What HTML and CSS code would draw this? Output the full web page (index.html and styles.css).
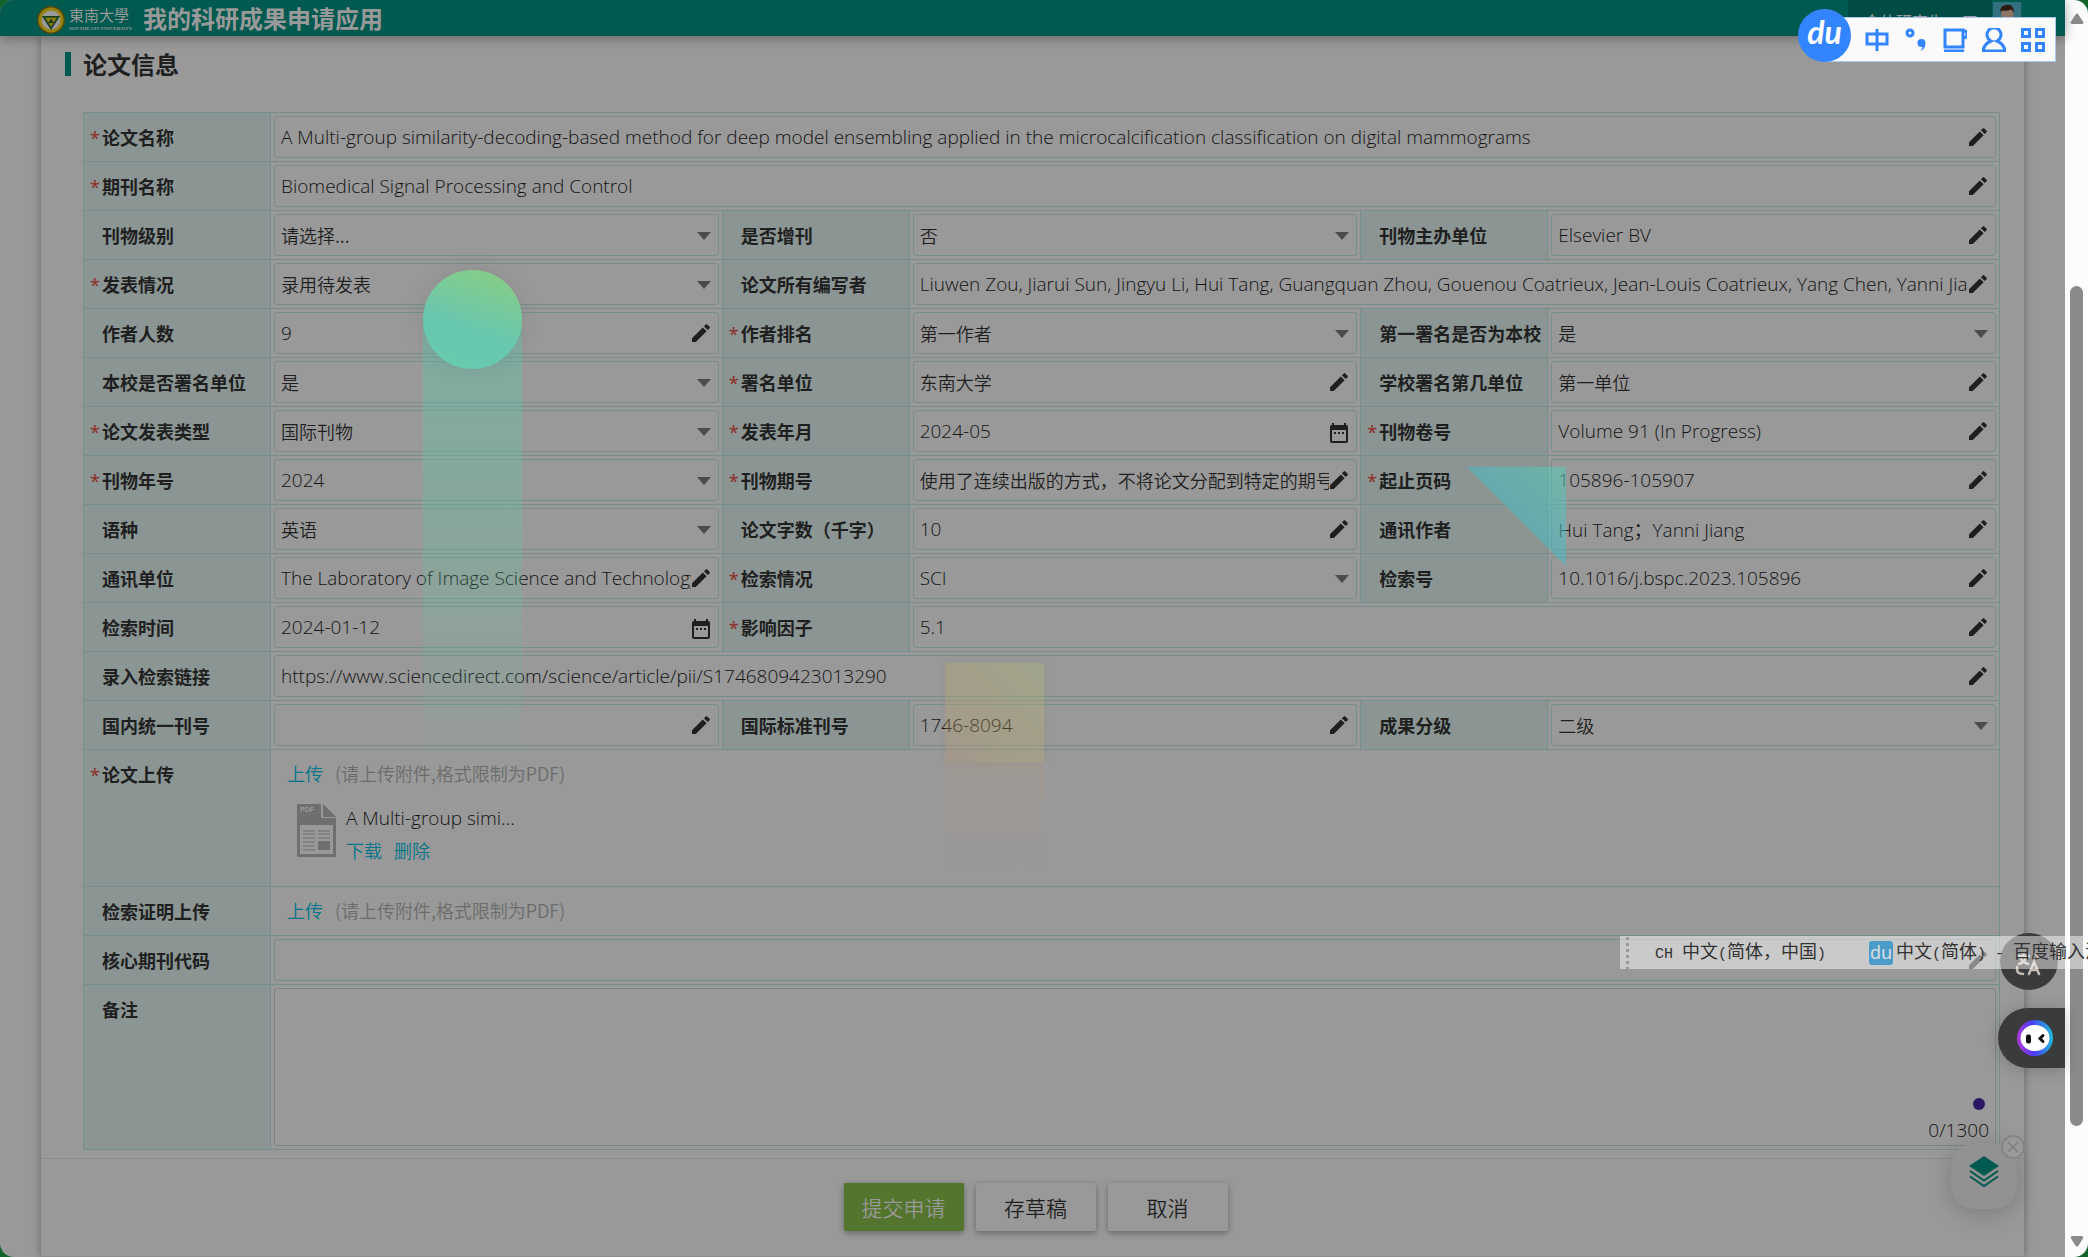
FILE: index.html
```html
<!DOCTYPE html>
<html lang="zh-CN">
<head>
<meta charset="utf-8">
<title>我的科研成果申请应用</title>
<link rel="stylesheet" href="styles.css">
</head>
<body>
<svg class="defs" aria-hidden="true">
  <symbol id="pen" viewBox="0 0 20 20"><path d="M1 15.2V19h3.8L15.6 8.2l-3.8-3.8zM18.600 5.200a1 1 0 0 0 0-1.400L16.200 1.400a1 1 0 0 0-1.400 0L12.900 3.300l3.800 3.800z"/></symbol>
  <symbol id="cal" viewBox="0 0 20 20"><path fill-rule="evenodd" d="M3 2V0h2v2h10V0h2v2h.5Q19 2 19 4v14q0 2-2 2H3q-2 0-2-2V4q0-2 2-2zM3 7v11h14V7zM5 9h2v2H5zm4 0h2v2H9zm4 0h2v2h-2z"/></symbol>
  <symbol id="down" viewBox="0 0 14 8"><path d="M0 0h14L7 8z"/></symbol>
</svg>
<div class="window">
  <div class="page">
    <header class="topbar">
      <svg class="seal" viewBox="0 0 28 28"><circle cx="14" cy="14" r="14" fill="#4e4a12"/><circle cx="14" cy="14" r="12.500" fill="#96820c"/><circle cx="14" cy="14" r="9.500" fill="#999"/><path d="M5 10h18l-9 14z" fill="#123c20"/><path d="M8 11.500h12L14 21z" fill="#8a7a10"/><path d="M11 17l3-4 3 4z" fill="#123c20"/></svg>
      <div class="school"><span class="school-cn">東南大學</span><span class="school-en">SOUTHEAST UNIVERSITY</span></div>
      <h1>我的科研成果申请应用</h1>
      <div class="account"><span>全体研究生</span><svg class="account-arrow" viewBox="0 0 14 8"><use href="#down"/></svg></div>
      <svg class="avatar" viewBox="0 0 30 36"><rect width="30" height="36" fill="#32707f"/><path d="M9 8h13v8q-6 8-13 0z" fill="#8d7565"/><path d="M8 11q-1-8 8-8 7 0 6 9l-2-4q-6 2-10 1z" fill="#2c1a12"/></svg>
    </header>
    <main class="card">
      <h2>论文信息</h2>
      <form id="paper">
      <table class="grid">
        <colgroup><col class="c-label"><col><col class="c-label"><col><col class="c-label"><col></colgroup>
        <tbody id="rows"></tbody>
      </table>
      <footer class="actions">
        <button type="button" class="primary">提交申请</button>
        <button type="button">存草稿</button>
        <button type="button">取消</button>
      </footer>
      </form>
    </main>
    <div class="ball-trail"></div>
    <div class="ball"></div>
    <svg class="triangle" viewBox="0 0 98 98"><defs><linearGradient id="tg" x1="0" y1="1" x2="1" y2="0"><stop offset=".4" stop-color="#44b7c8"/><stop offset="1" stop-color="#58ccb4"/></linearGradient></defs><path d="M0 0h98v98z" fill="url(#tg)" fill-opacity=".55"/></svg>
    <div class="square"></div>
    <div class="square-trail"></div>
    <i class="dot"></i>
    <button class="translate" type="button" aria-label="翻译"><svg viewBox="0 0 28 28" fill="none" stroke="#c5bcb4" stroke-width="2.500" stroke-linecap="round"><path d="M3 4h11M8.500 1v3M4 12q6-2 8-8M5 5q2 5 8 7M19 2h2q3 0 3 4M2 15v2q0 5 6 5M14 22l5-12 5 12M16 18h6"/></svg></button>
    <button class="assistant" type="button" aria-label="助手"><svg viewBox="0 0 36 36"><defs><linearGradient id="rg" x1="0" y1=".7" x2="1" y2=".6"><stop offset="0" stop-color="#b436d8"/><stop offset=".45" stop-color="#4b3cf5"/><stop offset="1" stop-color="#22b8dc"/></linearGradient></defs><circle cx="18" cy="18" r="18" fill="url(#rg)"/><ellipse cx="18" cy="18" rx="14.500" ry="13" fill="#fff"/><rect x="9" y="14.500" width="5" height="9" rx="2" fill="#111"/><path d="M26 15.500L23 18.500l3 3" fill="none" stroke="#111" stroke-width="3" stroke-linecap="round"/></svg></button>
    <button class="layers" type="button" aria-label="图层"><svg viewBox="0 0 30 32"><path d="M15 0l15 10-15 10L0 10z" fill="#005a50"/><path d="M1 15l14 9.500L29 15M1 20.500l14 9.500 14-9.500" fill="none" stroke="#005a50" stroke-width="2"/></svg></button>
    <button class="dismiss" type="button" aria-label="关闭"><svg viewBox="0 0 24 24" fill="none" stroke="#808080" stroke-width="1.500"><circle cx="12" cy="12" r="11"/><path d="M7 7l10 10M17 7L7 17"/></svg></button>
  </div>
  <div class="scroll"><svg viewBox="0 0 14 12"><path d="M5.500 1.500q1.500-2 3 0L14 10q0 2-2 2H2q-2 0-2-2z"/></svg><div class="thumb"></div><svg viewBox="0 0 14 12"><path d="M5.500 10.500q1.500 2 3 0L14 2q0-2-2-2H2q-2 0-2 2z"/></svg></div>
</div>
<div class="langbar"><i class="grip"></i><span class="lang-a"><tt>CH </tt>中文<tt>(</tt>简体，中国<tt>)</tt></span><b>du</b><span>中文<tt>(</tt>简体<tt>) - </tt>百度输入法</span></div>
<div class="ime">
  <svg class="ime-icon" viewBox="0 0 24 24"><path d="M2 6h20v10H2zM12 1v22"/></svg>
  <svg class="ime-icon" viewBox="0 0 24 24"><circle cx="6" cy="5" r="3"/><path class="solid" d="M21.500 15a4 4 0 1 0-4 4q1 0 1 0-.5 2.500-2 4 5-2 5-8z"/></svg>
  <svg class="ime-icon" viewBox="0 0 24 24"><path d="M2 2h18v17H2zM20 3h2q2 0 2 3 0 4-4 4M1 23h20"/></svg>
  <svg class="ime-icon" viewBox="0 0 24 24"><path d="M9 13a7 7 0 1 1 6 0q7 3 8 10H1q1-7 8-10z"/></svg>
  <svg class="ime-icon" viewBox="0 0 24 24"><path d="M1.500 1.500h7v7h-7zM15.500 1.500h7v7h-7zM1.500 15.500h7v7h-7zM15.500 15.500h7v7h-7z"/></svg>
</div>
<div class="ime-logo">du</div>
<script src="form.js"></script>
</body>
</html>
```
FILE: form.js
```javascript
// Each field: [label, required, kind, value, column span]
const rows = [
  [['论文名称', 1, 'pen', 'A Multi-group similarity-decoding-based method for deep model ensembling applied in the microcalcification classification on digital mammograms', 5]],
  [['期刊名称', 1, 'pen', 'Biomedical Signal Processing and Control', 5]],
  [['刊物级别', 0, 'down', '请选择...'], ['是否增刊', 0, 'down', '否'], ['刊物主办单位', 0, 'pen', 'Elsevier BV']],
  [['发表情况', 1, 'down', '录用待发表'], ['论文所有编写者', 0, 'pen', 'Liuwen Zou, Jiarui Sun, Jingyu Li, Hui Tang, Guangquan Zhou, Gouenou Coatrieux, Jean-Louis Coatrieux, Yang Chen, Yanni Jiang', 3]],
  [['作者人数', 0, 'pen', '9'], ['作者排名', 1, 'down', '第一作者'], ['第一署名是否为本校', 0, 'down', '是']],
  [['本校是否署名单位', 0, 'down', '是'], ['署名单位', 1, 'pen', '东南大学'], ['学校署名第几单位', 0, 'pen', '第一单位']],
  [['论文发表类型', 1, 'down', '国际刊物'], ['发表年月', 1, 'cal', '2024-05'], ['刊物卷号', 1, 'pen', 'Volume 91 (In Progress)']],
  [['刊物年号', 1, 'down', '2024'], ['刊物期号', 1, 'pen', '使用了连续出版的方式，不将论文分配到特定的期号'], ['起止页码', 1, 'pen', '105896-105907']],
  [['语种', 0, 'down', '英语'], ['论文字数（千字）', 0, 'pen', '10'], ['通讯作者', 0, 'pen', 'Hui Tang；Yanni Jiang']],
  [['通讯单位', 0, 'pen', 'The Laboratory of Image Science and Technology'], ['检索情况', 1, 'down', 'SCI'], ['检索号', 0, 'pen', '10.1016/j.bspc.2023.105896']],
  [['检索时间', 0, 'cal', '2024-01-12'], ['影响因子', 1, 'pen', '5.1', 3]],
  [['录入检索链接', 0, 'pen', 'https://www.sciencedirect.com/science/article/pii/S1746809423013290', 5]],
  [['国内统一刊号', 0, 'pen', ''], ['国际标准刊号', 0, 'pen', '1746-8094'], ['成果分级', 0, 'down', '二级']],
  [['论文上传', 1, 'file', 'A Multi-group simi...', 5]],
  [['检索证明上传', 0, 'file', '', 5]],
  [['核心期刊代码', 0, 'pen', '', 5]],
  [['备注', 0, 'area', '', 5]]
];

let next = 0;
const upload = '<p class="upload"><a href="#">上传</a><span>(请上传附件,格式限制为PDF)</span></p>';
const pdf = '<svg class="pdf" viewBox="0 0 39 53"><path d="M0 0h24v14h15v39H0z" fill="#6f6f6f"/><path d="M26 0l13 13H26z" fill="#6f6f6f"/><path d="M3 21h33v29H3z" fill="#999"/><path d="M6 27h12M6 30h12M6 34h12M6 38h12M6 42h12M6 46h12M21 27h12M21 30h12M21 34h12" stroke="#6f6f6f"/><path d="M21 37h12v9H21z" fill="#6f6f6f"/><text x="3" y="8">PDF</text></svg>';

function control(kind, value, id) {
  const text = /[a-z0-9]/i.test(value) ? 'latin' : 'han';
  if (kind === 'down') {
    return `<div class="field"><select id="${id}" class="${text}"><option>${value}</option></select><svg class="i-down"><use href="#down"/></svg></div>`;
  }
  if (kind === 'file') {
    const item = value ? `<div class="item">${pdf}<div><div class="name">${value}</div><a href="#">下载</a><a href="#">删除</a></div></div>` : '';
    return upload + item;
  }
  if (kind === 'area') {
    return `<div class="field area"><textarea id="${id}"></textarea><span class="count">0/1300</span></div>`;
  }
  return `<div class="field"><input id="${id}" class="${text}" type="text" value="${value}"><svg class="i-${kind}"><use href="#${kind}"/></svg></div>`;
}

document.getElementById('rows').innerHTML = rows.map(row => '<tr>' + row.map(([label, required, kind, value, span]) => {
  const id = 'f' + next++;
  const name = kind === 'file' ? `<span class="label">${label}</span>` : `<label class="label" for="${id}">${label}</label>`;
  return `<th scope="row"><i class="star">${required ? '*' : ''}</i>${name}</th><td colspan="${span || 1}" class="${kind === 'file' ? (value ? 'files' : 'nofile') : ''}">${control(kind, value, id)}</td>`;
}).join('') + '</tr>').join('');
```
FILE: styles.css
```css
* { box-sizing: border-box; }
html, body { height: 100%; }
body { margin: 0; background: #12642c; overflow: hidden; color: #1f1f1f; font: 18px/24px "Noto Sans", "Noto Sans CJK SC", sans-serif; position: relative; }
a { color: #00758a; text-decoration: none; }
.defs { position: absolute; width: 0; height: 0; }
.window { display: flex; min-height: 100%; border-radius: 14px; overflow: hidden; }
.page { flex: 1; min-width: 0; position: relative; background: #999; padding: 0 41px; }
.topbar { display: flex; align-items: center; height: 36px; margin: 0 -41px; padding: 0 43px 0 37px; background: #005a50; box-shadow: 0 2px 12px rgba(0,0,0,.35); position: relative; z-index: 1; }
.seal { width: 28px; height: 28px; margin-top: 4px; }
.school { display: flex; flex-direction: column; width: 62px; margin: 2px 12px 0 4px; color: #999; white-space: nowrap; }
.school-cn { font: 15px/18px "Liberation Serif", "Noto Sans CJK TC", serif; }
.school-en { font: bold 5px/7px "Liberation Serif", serif; }
h1 { margin: 0; font: bold 24px/36px "Noto Sans CJK SC", sans-serif; color: #999; flex: 1; }
.account { display: flex; gap: 18px; width: 144px; height: 36px; padding: 12px 0 0 16px; background: #004b43; color: #999; font-size: 16px; line-height: 20px; }
.account-arrow { width: 16px; height: 8px; margin-top: 4px; fill: #999; }
.avatar { width: 30px; height: 34px; margin-top: 2px; }
.card { background: #999; min-height: 1221px; box-shadow: 0 0 8px rgba(0,0,0,.35); }
h2 { margin: 0; padding: 16px 24px 0; font: bold 24px/24px "Noto Sans CJK SC", sans-serif; display: flex; gap: 12px; }
h2::before { content: ""; width: 6px; height: 24px; background: #005a50; }
.grid { width: calc(100% - 66px); margin: 36px 24px 0 42px; table-layout: fixed; border-collapse: collapse; }
.c-label { width: 187px; }
th, td { border: 1px solid #778f8c; padding: 0; vertical-align: top; }
th { background: #8b9593; text-align: left; height: 49px; padding: 12px 0 0 6px; font: bold 18px/24px "Noto Sans CJK SC", sans-serif; white-space: nowrap; }
.star { display: inline-block; width: 12px; font: 18px/24px "Noto Sans", sans-serif; color: #8e2f29; }
td { padding: 3px; }
.field { position: relative; display: flex; }
input, select, textarea { width: 100%; height: 42px; border: 1px solid #778f8c; border-radius: 3px; background: transparent; color: #1f1f1f; padding: 0 27px 1px 6px; outline: 0; appearance: none; font: 18px/24px "Noto Sans CJK SC", sans-serif; }
select { padding-bottom: 0; }
.latin, .name, .count { font: 350 19px/24px "Open Sans", "Noto Sans CJK SC", sans-serif; color: #141414; }
.han { font-weight: 350; }
textarea { height: 158px; border-color: #7c8583; resize: none; }
.field svg { position: absolute; pointer-events: none; fill: #1f1f1f; }
.field .i-pen { right: 8px; top: 11px; width: 20px; height: 20px; }
.field .i-cal { right: 8px; top: 13px; width: 20px; height: 20px; }
.field .i-down { right: 8px; top: 18px; width: 14px; height: 8px; fill: #4c4c4c; }
.count { position: absolute; right: 7px; bottom: 4px; }
td.files { height: 137px; padding: 11px 16px; }
td.nofile { padding: 11px 16px; }
.upload { margin: 0; display: flex; gap: 12px; color: #6c6c6c; font: 350 18px/24px "Noto Sans CJK SC", sans-serif; }
.item { display: flex; gap: 10px; margin: 17px 0 0 10px; }
.item a { margin-right: 12px; font: 350 18px/32px "Noto Sans CJK SC", sans-serif; }
.item .name { line-height: 32px; }
.pdf { width: 39px; height: 53px; margin-top: 2px; }
.pdf text { font: bold 7px "Liberation Sans", sans-serif; fill: #999; }
.actions { display: flex; justify-content: center; gap: 12px; height: 99px; margin-top: 8px; padding: 24px 0 0 6px; border-top: 1px solid #8c8c8c; border-bottom: 1px solid #8c8c8c; }
.actions button { width: 120px; height: 48px; padding: 0; border: 0; border-radius: 2px; background: #999; color: #1f1f1f; box-shadow: 0 2px 6px rgba(0,0,0,.35); font: 350 21px/24px "Noto Sans CJK SC", sans-serif; }
.actions .primary { background: #53752d; color: #999; }

/* Decorative shapes that float over the form */
.ball, .ball-trail, .square, .square-trail, .triangle { position: absolute; pointer-events: none; }
.ball { left: 423px; top: 270px; width: 99px; height: 99px; border-radius: 50%; background: linear-gradient(200deg, #82d08c 15%, #66c9b2 60%, #67cdae); box-shadow: 0 0 24px rgba(0,0,0,.08); opacity: .95; }
.ball-trail { left: 423px; top: 320px; width: 99px; height: 450px; background: linear-gradient(rgba(86,206,173,.38), rgba(86,206,160,.2) 60%, rgba(86,206,150,0)); }
.triangle { left: 1467px; top: 467px; width: 99px; height: 99px; }
.square { left: 945px; top: 663px; width: 99px; height: 99px; background: linear-gradient(45deg, rgba(185,148,110,.3), rgba(190,168,100,.3) 40%, rgba(180,190,110,.3)); box-shadow: 0 0 12px rgba(0,0,0,.03); }
.square-trail { left: 945px; top: 762px; width: 99px; height: 110px; background: linear-gradient(rgba(175,150,130,.25), rgba(153,153,140,0)); }
.dot { position: absolute; right: 80px; top: 1098px; width: 12px; height: 12px; border-radius: 50%; background: #2c1763; }
.page > button { position: absolute; display: grid; place-items: center; border: 0; padding: 0; z-index: 2; }
.page > .translate { right: 7px; top: 933px; width: 58px; height: 57px; border-radius: 50%; background: #3a3b3c; }
.translate svg { width: 28px; height: 28px; margin-top: 8px; }
.page > .assistant { right: 0; top: 1008px; width: 67px; height: 60px; border-radius: 30px 0 0 30px; background: #3a3b3c; box-shadow: 0 2px 16px rgba(0,0,0,.2); padding-left: 6px; }
.assistant svg { width: 36px; height: 36px; }
.page > .layers { right: 48px; top: 1143px; width: 66px; height: 66px; border-radius: 24px; background: #929292; box-shadow: 0 4px 24px rgba(0,0,0,.2); }
.layers svg { width: 30px; height: 32px; margin-top: -8px; }
.page > .dismiss { right: 40px; top: 1135px; width: 24px; height: 24px; border-radius: 50%; background: #999; }
.dismiss svg { width: 24px; height: 24px; }

.scroll { width: 23px; background: #fcfcfc; padding: 13px 0 10px; display: flex; flex-direction: column; align-items: center; justify-content: space-between; }
.scroll svg { width: 14px; height: 11px; fill: #8a8a8a; }
.scroll .thumb { width: 13px; height: 840px; margin-top: 152px; border-radius: 7px; background: #8a8a8a; }

/* System input-method widgets on top of the window */
.langbar { position: absolute; right: 0; top: 936px; width: 468px; height: 33px; overflow: hidden; display: flex; align-items: center; white-space: nowrap; background: rgba(255,255,255,.48); color: #333; font: 18px/24px "Noto Sans CJK SC", sans-serif; z-index: 3; }
.langbar tt { font: 15px/24px "Liberation Mono", monospace; white-space: pre; }
.grip { width: 3px; height: 32px; margin: 0 26px 0 6px; background: repeating-linear-gradient(#999 0 3px, transparent 3px 6px); flex: none; }
.lang-a { width: 214px; flex: none; }
.langbar b { width: 24px; height: 24px; margin-right: 3px; border-radius: 3px; background: #4b9cc9; color: #ddd; font: 18px/22px "Noto Sans", sans-serif; text-align: center; flex: none; }
.ime { position: absolute; right: 32px; top: 17px; width: 233px; height: 45px; display: flex; align-items: center; justify-content: flex-end; gap: 15px; padding-right: 10px; background: #fafafa; border: 1px solid #a9c8f3; z-index: 3; }
.ime-icon { width: 24px; height: 24px; fill: none; stroke: #3385ff; stroke-width: 3; }
.ime-icon .solid { fill: #3385ff; stroke: none; }
.ime-logo { position: absolute; right: 237px; top: 9px; width: 53px; height: 53px; border-radius: 50%; background: #3385ff; color: #fff; font: italic bold 32px/46px Lato, sans-serif; text-align: center; z-index: 4; }
```
